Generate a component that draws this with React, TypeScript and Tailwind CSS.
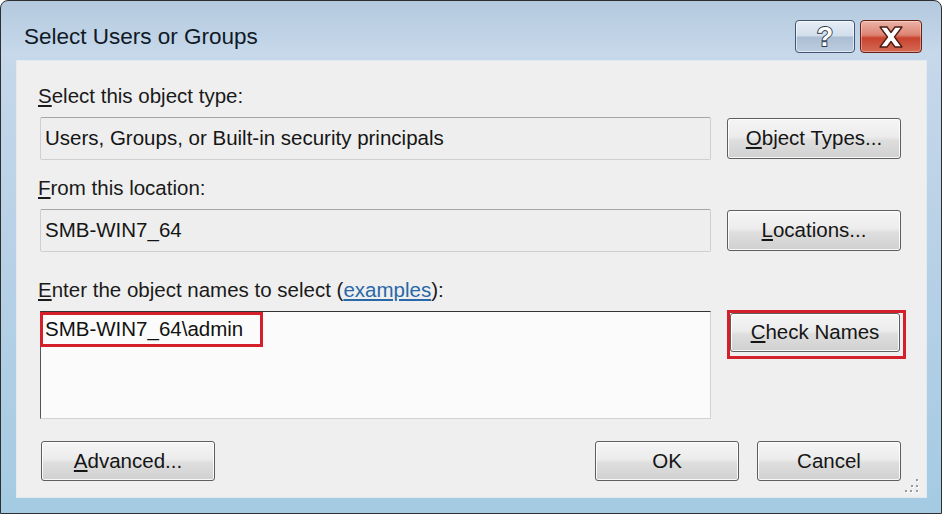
import React from 'react';

const font = "font-['Liberation_Sans',Arial,sans-serif]";

function Btn({ children, className = '' }: { children: React.ReactNode; className?: string }) {
  return (
    <div
      className={`flex items-center justify-center rounded-[3px] border border-[#5e5e5e] bg-[linear-gradient(180deg,#f5f5f5_0%,#ececec_45%,#dedede_55%,#d0d0d0_100%)] shadow-[inset_0_0_0_1px_rgba(255,255,255,0.85)] text-[20.5px] text-[#151515] ${className}`}
    >
      {children}
    </div>
  );
}

function Field({ children }: { children: React.ReactNode }) {
  return (
    <div className="mt-[9px] flex h-[43px] items-center rounded-[2px] border border-[#cfcfcf] border-t-[#a5a5a5] bg-[#eeeeee] px-[4px] text-[20.5px] text-[#151515]">
      {children}
    </div>
  );
}

function Label({ children }: { children: React.ReactNode }) {
  return <div className="-ml-[2px] h-[24px] text-[20.5px] leading-[24px] text-[#1a1a1a]">{children}</div>;
}

export default function App() {
  return (
    <div className={`h-[514px] w-[942px] bg-white ${font}`}>
      <div className="flex h-full flex-col rounded-t-[8px] border border-[#2e2e2e] bg-[linear-gradient(180deg,#b4c9de_0%,#c6d8ea_10%,#bbd2e7_40%,#a4cbe3_100%)] pb-[15px] pl-[15px] pr-[14px]">
        {/* title bar */}
        <div className="flex h-[59px] shrink-0 items-start justify-between">
          <div className="pl-[8px] pt-[22px] text-[22.5px] leading-[28px] text-[#101a26]">Select Users or Groups</div>
          <div className="mr-[5px] mt-[19px] flex gap-[5px]">
            <div className="flex h-[33px] w-[60px] items-center justify-center rounded-[4px] border border-[#3f546e] bg-[linear-gradient(180deg,#e6edf6_0%,#d2deeb_48%,#abbed4_52%,#bccde0_100%)] shadow-[inset_0_0_0_1px_rgba(255,255,255,0.6)]">
              <svg width="22" height="28" viewBox="0 0 22 28">
                <text
                  x="11"
                  y="23"
                  textAnchor="middle"
                  fontFamily="Liberation Sans, Arial, sans-serif"
                  fontWeight="700"
                  fontSize="27"
                  fill="#ffffff"
                  stroke="#2a3648"
                  strokeWidth="1.8"
                  paintOrder="stroke"
                >
                  ?
                </text>
              </svg>
            </div>
            <div className="flex h-[33px] w-[62px] items-center justify-center rounded-[4px] border border-[#6a1f17] bg-[linear-gradient(180deg,#ebb3a7_0%,#dd8473_45%,#c8432e_55%,#d56b56_100%)] shadow-[inset_0_0_0_1px_rgba(255,255,255,0.35)]">
              <svg width="26" height="22" viewBox="0 0 26 22">
                <path
                  d="M2 1H9L13 6.5L17 1H24L16.5 11L24 21H17L13 15.5L9 21H2L9.5 11Z"
                  fill="#ffffff"
                  stroke="#4a1a12"
                  strokeWidth="1.3"
                  strokeLinejoin="round"
                />
              </svg>
            </div>
          </div>
        </div>

        {/* client area */}
        <div className="relative flex-1 border border-[#e2e9f0] bg-[#efefef] pl-[23px] pt-[23px]">
          <div className="flex items-end gap-[16px]">
            <div className="w-[671px]">
              <Label>
                <span className="underline">S</span>elect this object type:
              </Label>
              <Field>Users, Groups, or Built-in security principals</Field>
            </div>
            <Btn className="mb-[1px] h-[41px] w-[174px]">
              <span className="underline">O</span>bject Types...
            </Btn>
          </div>

          <div className="mt-[16px] flex items-end gap-[16px]">
            <div className="w-[671px]">
              <Label>
                <span className="underline">F</span>rom this location:
              </Label>
              <Field>SMB-WIN7_64</Field>
            </div>
            <Btn className="mb-[1px] h-[41px] w-[174px]">
              <span className="underline">L</span>ocations...
            </Btn>
          </div>

          <div className="mt-[26px] flex items-start gap-[16px]">
            <div className="w-[671px]">
              <Label>
                <span className="underline">E</span>nter the object names to select (
                <span className="text-[#2b68a8] underline">examples</span>):
              </Label>
              <div className="mt-[9px] h-[108px] border border-[#d2d2d2] border-l-[#555555] border-t-[#333333] bg-[#fbfbfb]">
                <div className="-ml-px flex h-[35px] w-[223px] items-center border-[3px] border-[#d3202a] pl-[2px] text-[20.5px] text-[#111111]">
                  SMB-WIN7_64\admin
                </div>
              </div>
            </div>
            <div className="mt-[32px] w-[174px]">
              <div className="h-[49px] w-[179px] shrink-0 border-[3px] border-[#d3202a] pb-[4px] pr-[3px]">
                <Btn className="h-full w-full">
                  <span className="underline">C</span>heck Names
                </Btn>
              </div>
            </div>
          </div>

          <div className="mt-[22px] flex w-[861px]">
            <Btn className="ml-[1px] h-[40px] w-[174px]">
              <span className="underline">A</span>dvanced...
            </Btn>
            <Btn className="ml-auto h-[40px] w-[144px]">OK</Btn>
            <Btn className="ml-[18px] h-[40px] w-[144px]">Cancel</Btn>
          </div>

          <svg className="absolute bottom-[4px] right-[6px]" width="16" height="16" viewBox="0 0 16 16">
            {[
              [12, 2],
              [7, 8],
              [12, 8],
              [1, 13],
              [6, 13],
              [12, 13],
            ].map(([x, y]) => (
              <g key={`${x}-${y}`}>
                <rect x={x + 1} y={y + 1} width="2" height="2" fill="#ffffff" />
                <rect x={x} y={y} width="2" height="2" fill="#9a9a9a" />
              </g>
            ))}
          </svg>
        </div>
      </div>
    </div>
  );
}
